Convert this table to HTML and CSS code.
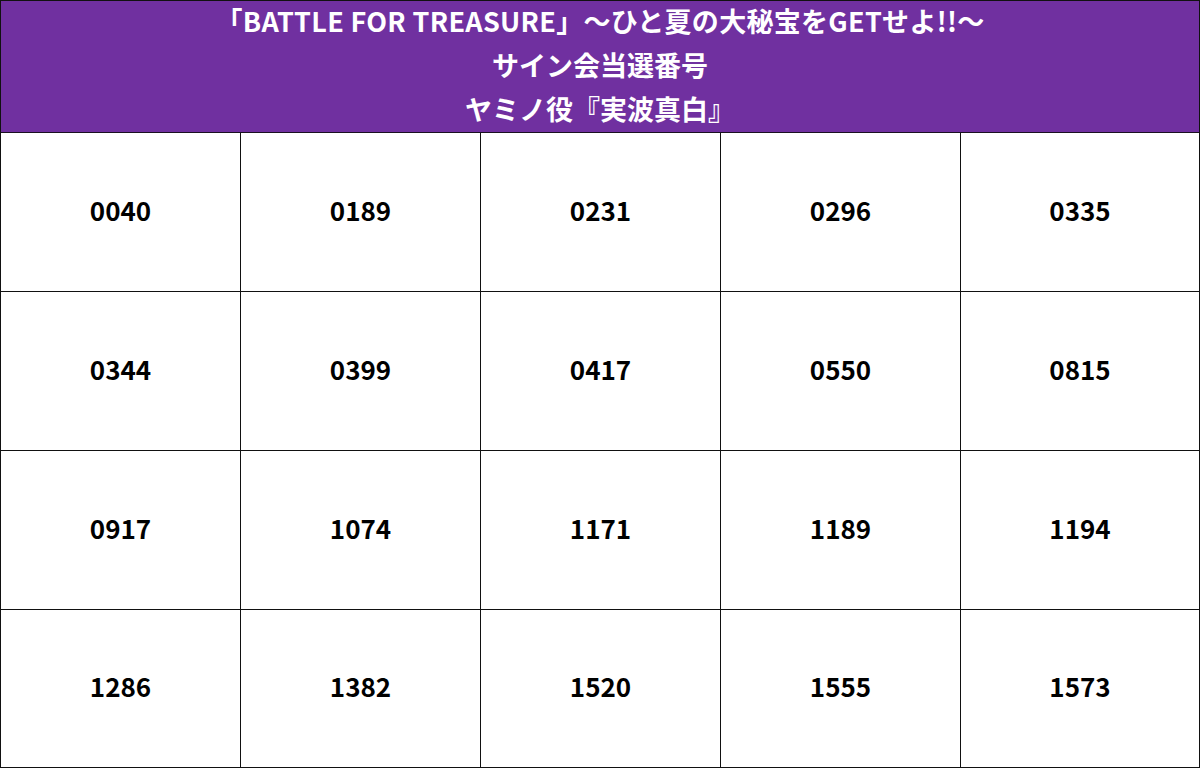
FILE: index.html
```html
<!DOCTYPE html>
<html lang="ja">
<head>
<meta charset="utf-8">
<link rel="stylesheet" href="styles.css">
</head>
<body>
<div class="sheet">
  <header class="title">
    <div class="line">「BATTLE FOR TREASURE」〜ひと夏の大秘宝をGETせよ!!〜</div>
    <div class="line">サイン会当選番号</div>
    <div class="line">ヤミノ役『実波真白』</div>
  </header>
  <div class="grid">
    <div class="cell">0040</div><div class="cell">0189</div><div class="cell">0231</div><div class="cell">0296</div><div class="cell">0335</div>
    <div class="cell">0344</div><div class="cell">0399</div><div class="cell">0417</div><div class="cell">0550</div><div class="cell">0815</div>
    <div class="cell">0917</div><div class="cell">1074</div><div class="cell">1171</div><div class="cell">1189</div><div class="cell">1194</div>
    <div class="cell">1286</div><div class="cell">1382</div><div class="cell">1520</div><div class="cell">1555</div><div class="cell">1573</div>
  </div>
</div>
</body>
</html>
```
FILE: styles.css
```css
html, body {
  margin: 0;
  padding: 0;
  background: #fff;
}
.sheet {
  box-sizing: border-box;
  width: 1200px;
  height: 768px;
  border: 1px solid #111;
  display: flex;
  flex-direction: column;
  font-family: "Noto Sans CJK JP", "Noto Sans", sans-serif;
  font-weight: 700;
}
.title {
  height: 131px;
  background: #7030a0;
  border-bottom: 1px solid #1a1020;
  color: #fff;
  text-align: center;
  font-size: 27px;
}
.line {
  height: 44px;
  line-height: 40px;
  padding-bottom: 4px;
  box-sizing: border-box;
}
.line:first-child {
  letter-spacing: 0.3px;
}
.grid {
  flex: 1;
  display: grid;
  grid-template-columns: 239px 239px 239px 239px 238px;
  grid-template-rows: 158px 158px 158px 157px;
  gap: 1px;
  background: #111;
}
.cell {
  background: #fff;
  color: #000;
  display: flex;
  align-items: center;
  justify-content: center;
  font-size: 26px;
  padding-bottom: 6px;
}
```
